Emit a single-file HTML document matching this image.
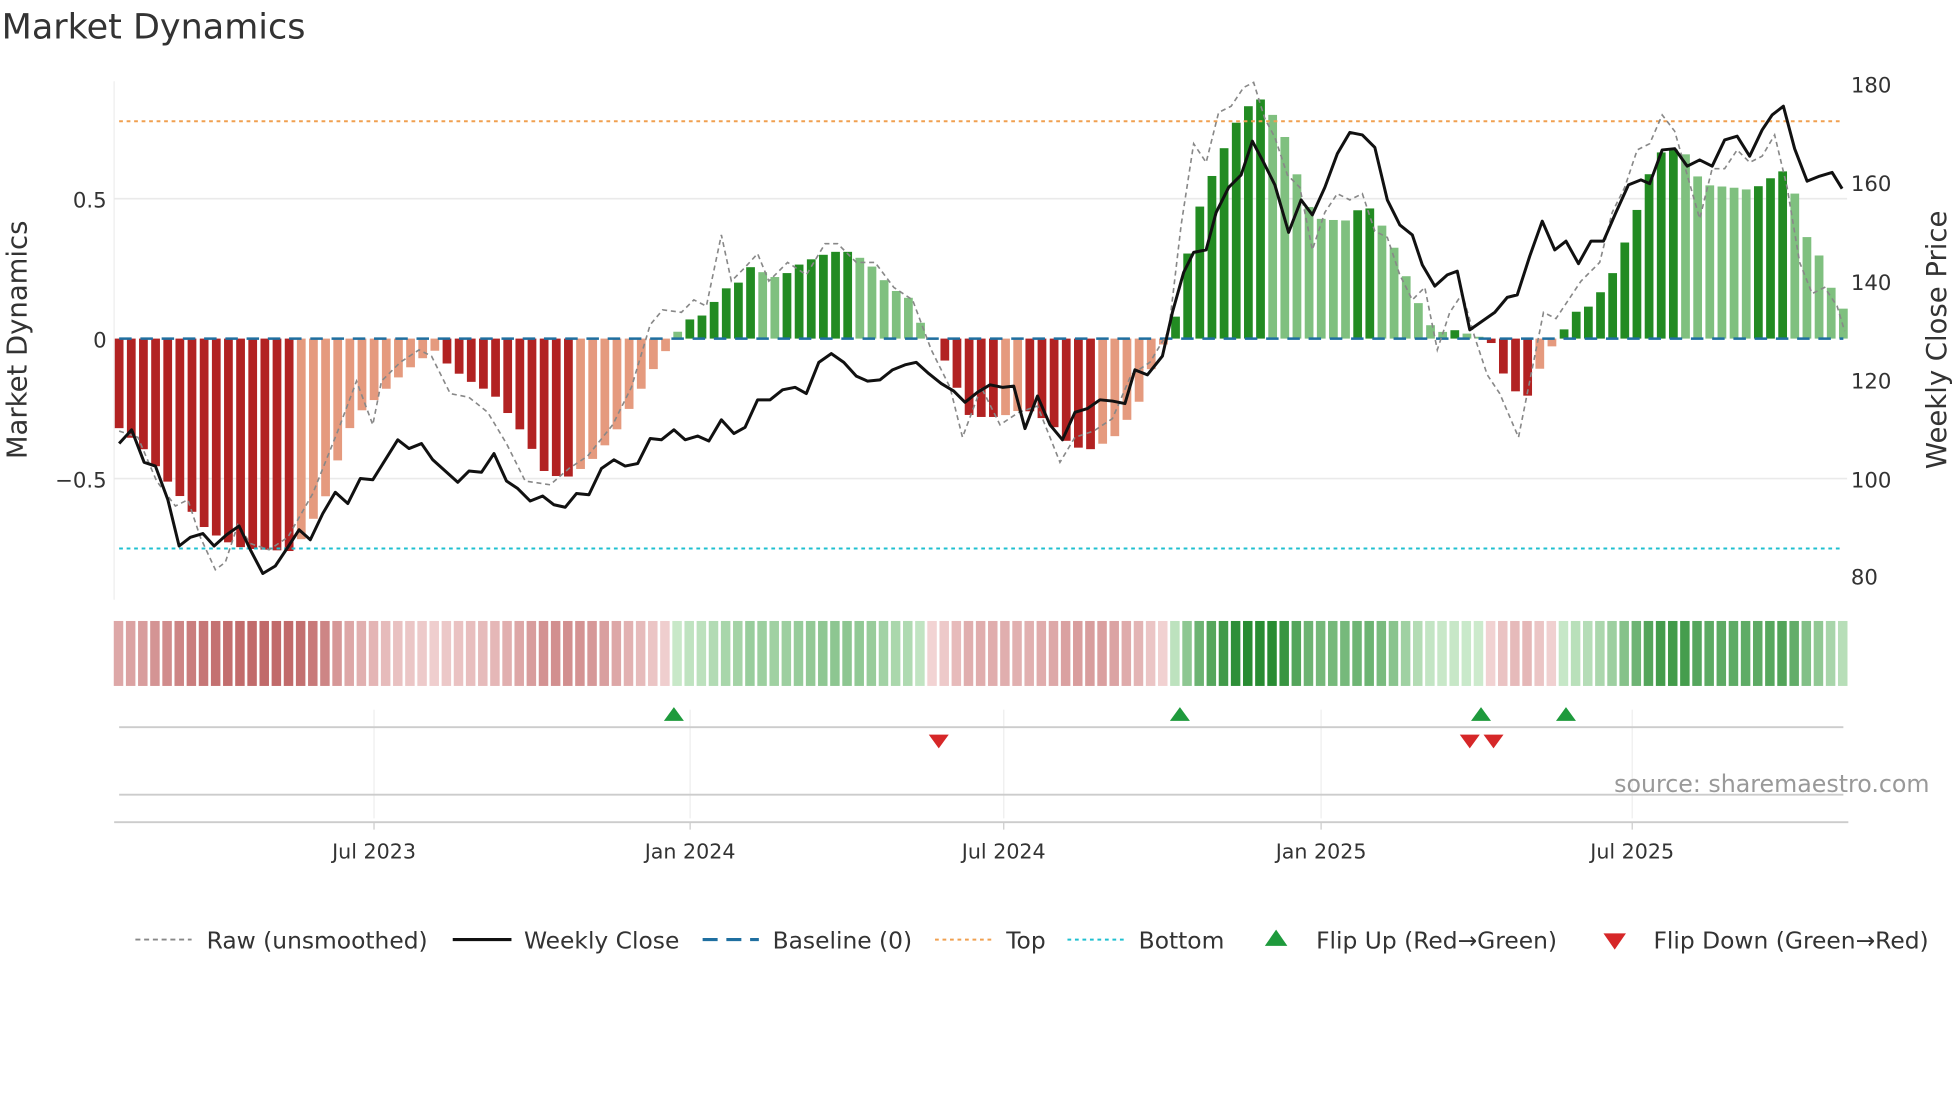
<!DOCTYPE html>
<html><head><meta charset="utf-8"><style>
html,body{margin:0;padding:0;background:#fff;width:1960px;height:1102px;overflow:hidden}
svg{display:block}
text{font-family:"DejaVu Sans","Liberation Sans",sans-serif;fill:#333}
</style></head><body>
<svg id="s" width="1960" height="1102" viewBox="0 0 1568 882" xmlns="http://www.w3.org/2000/svg">
<text x="1" y="31" font-size="28" fill="#333">Market Dynamics</text>
<line x1="91" y1="65" x2="91" y2="480" stroke="#eee" stroke-width="1"/>
<line x1="91" y1="159" x2="1478" y2="159" stroke="#eaeaea" stroke-width="1.3"/>
<line x1="91" y1="383" x2="1478" y2="383" stroke="#eaeaea" stroke-width="1.3"/>
<g id="bars"></g>
<line x1="95" y1="97" x2="1475" y2="97" stroke="#f0a050" stroke-width="1.6" stroke-dasharray="3,3"/>
<line x1="95" y1="439" x2="1475" y2="439" stroke="#20c0d0" stroke-width="1.6" stroke-dasharray="3,3"/>
<line x1="95" y1="271" x2="1475" y2="271" stroke="#1f6fa0" stroke-width="2" stroke-dasharray="10,7"/>
<polyline id="raw" fill="none" stroke="#888" stroke-width="1.3" stroke-dasharray="4,3"/>
<polyline id="px" fill="none" stroke="#111" stroke-width="2.4" stroke-linejoin="round"/>
<text x="85" y="166" font-size="17" text-anchor="end">0.5</text>
<text x="85" y="278" font-size="17" text-anchor="end">0</text>
<text x="85" y="390" font-size="17" text-anchor="end">−0.5</text>
<text x="1481" y="74" font-size="17">180</text>
<text x="1481" y="153" font-size="17">160</text>
<text x="1481" y="232" font-size="17">140</text>
<text x="1481" y="311" font-size="17">120</text>
<text x="1481" y="390" font-size="17">100</text>
<text x="1481" y="468" font-size="17">80</text>
<text transform="translate(21,272) rotate(-90)" font-size="22" text-anchor="middle">Market Dynamics</text>
<text transform="translate(1557,272) rotate(-90)" font-size="22" text-anchor="middle">Weekly Close Price</text>
<g id="heat"></g>
<g stroke="#eee" stroke-width="1">
<line x1="299" y1="568" x2="299" y2="655"/><line x1="552" y1="568" x2="552" y2="655"/><line x1="803" y1="568" x2="803" y2="655"/><line x1="1057" y1="568" x2="1057" y2="655"/><line x1="1306" y1="568" x2="1306" y2="655"/>
</g>
<line x1="95" y1="582" x2="1475" y2="582" stroke="#ccc" stroke-width="1.5"/>
<line x1="95" y1="636" x2="1475" y2="636" stroke="#ccc" stroke-width="1.5"/>
<line x1="91" y1="658" x2="1479" y2="658" stroke="#ccc" stroke-width="1.5"/>
<g fill="#1e9a3c">
<polygon points="531,577 547,577 539,566"/><polygon points="936,577 952,577 944,566"/><polygon points="1177,577 1193,577 1185,566"/><polygon points="1245,577 1261,577 1253,566"/>
</g>
<g fill="#d62728">
<polygon points="743,588 759,588 751,599"/><polygon points="1168,588 1184,588 1176,599"/><polygon points="1187,588 1203,588 1195,599"/>
</g>
<text x="1544" y="634" font-size="19" text-anchor="end" style="fill:#999">source: sharemaestro.com</text>
<g stroke="#ccc"><line x1="299" y1="658" x2="299" y2="664"/><line x1="552" y1="658" x2="552" y2="664"/><line x1="803" y1="658" x2="803" y2="664"/><line x1="1057" y1="658" x2="1057" y2="664"/><line x1="1306" y1="658" x2="1306" y2="664"/></g>
<g font-size="16.5" text-anchor="middle">
<text x="299" y="687">Jul 2023</text><text x="552" y="687">Jan 2024</text><text x="803" y="687">Jul 2024</text><text x="1057" y="687">Jan 2025</text><text x="1306" y="687">Jul 2025</text>
</g>
<g font-size="18.7">
<line x1="108" y1="752" x2="153" y2="752" stroke="#888" stroke-width="1.5" stroke-dasharray="4,3"/><text x="165" y="759">Raw (unsmoothed)</text>
<line x1="362" y1="752" x2="409" y2="752" stroke="#111" stroke-width="2.5"/><text x="419" y="759">Weekly Close</text>
<line x1="562" y1="752" x2="607" y2="752" stroke="#1f6fa0" stroke-width="2.5" stroke-dasharray="12,7"/><text x="618" y="759">Baseline (0)</text>
<line x1="748" y1="752" x2="794" y2="752" stroke="#f0a050" stroke-width="1.6" stroke-dasharray="3,3"/><text x="805" y="759">Top</text>
<line x1="854" y1="752" x2="900" y2="752" stroke="#20c0d0" stroke-width="1.6" stroke-dasharray="3,3"/><text x="911" y="759">Bottom</text>
<polygon points="1012,757 1030,757 1021,744" fill="#1e9a3c"/><text x="1053" y="759">Flip Up (Red→Green)</text>
<polygon points="1283,747 1301,747 1292,760" fill="#d62728"/><text x="1323" y="759">Flip Down (Green→Red)</text>
</g>
</svg>
<script>
var K=[[95,-0.32],[112,-0.38],[128,-0.48],[145,-0.57],[162,-0.67],[178,-0.72],[195,-0.75],[235,-0.76],[243,-0.70],[259,-0.58],[267,-0.47],[283,-0.28],[299,-0.22],[323,-0.12],[347,-0.04],[355,-0.08],[371,-0.14],[395,-0.20],[420,-0.35],[436,-0.48],[452,-0.50],[470,-0.45],[490,-0.35],[510,-0.2],[528,-0.07],[540,0.0],[545,0.06],[561,0.08],[577,0.16],[585,0.2],[593,0.2],[601,0.26],[617,0.22],[625,0.22],[641,0.27],[665,0.31],[681,0.31],[697,0.26],[713,0.18],[729,0.14],[737,0.05],[745,0.0],[750,-0.02],[760,-0.12],[776,-0.28],[800,-0.28],[820,-0.25],[840,-0.3],[856,-0.38],[870,-0.40],[890,-0.36],[905,-0.27],[915,-0.2],[925,-0.05],[935,0.0],[942,0.1],[950,0.3],[958,0.45],[974,0.63],[990,0.78],[1004,0.86],[1012,0.85],[1028,0.72],[1044,0.5],[1052,0.43],[1076,0.42],[1092,0.48],[1100,0.45],[1116,0.32],[1132,0.15],[1148,0.02],[1164,0.03],[1180,0.01],[1190,0.0],[1196,-0.03],[1204,-0.14],[1220,-0.23],[1228,-0.14],[1238,-0.06],[1245,0.0],[1250,0.02],[1258,0.09],[1274,0.12],[1290,0.23],[1306,0.41],[1322,0.62],[1330,0.67],[1346,0.68],[1362,0.55],[1386,0.54],[1402,0.53],[1426,0.6],[1434,0.55],[1442,0.43],[1450,0.29],[1458,0.3],[1466,0.17],[1476,0.1]];
function interp(x){for(var i=1;i<K.length;i++){if(x<=K[i][0]){var a=K[i-1],b=K[i];return a[1]+(b[1]-a[1])*(x-a[0])/(b[0]-a[0]);}}return K[K.length-1][1];}
var NS="http://www.w3.org/2000/svg",bars=document.getElementById('bars'),heat=document.getElementById('heat');
var n=143,step=(1475-95)/(n-1),prev=0;
function mix(c1,c2,t){return 'rgb('+c1.map(function(v,i){return Math.round(v+(c2[i]-v)*t)}).join(',')+')';}
for(var i=0;i<n;i++){var x=95+i*step,v=interp(x);var dark=Math.abs(v)>=Math.abs(prev);prev=v;
var h=Math.abs(v)*224,r=document.createElementNS(NS,'rect');r.setAttribute('x',x-3.5);r.setAttribute('width',7);
r.setAttribute('y',v>=0?271-h:271);r.setAttribute('height',Math.max(h,1));
r.setAttribute('fill',v>=0?(dark?'#228b22':'#7fc07f'):(dark?'#b22222':'#e59a7e'));bars.appendChild(r);
var t=Math.min(Math.abs(v)/0.8,1),hr=document.createElementNS(NS,'rect');hr.setAttribute('x',x-4.3);hr.setAttribute('width',7.6);hr.setAttribute('y',497);hr.setAttribute('height',52);
hr.setAttribute('fill',v>=0?mix([205,235,205],[40,140,50],t):mix([242,212,212],[190,100,100],t));heat.appendChild(hr);}
var P=[[95,355],[105,344],[115,370],[124,373],[134,400],[143,437],[152,430],[162,427],[171,437],[181,428],[191,421],[200,440],[210,459],[220,453],[230,438],[239,424],[248,432],[258,411],[268,394],[278,403],[288,383],[298,384],[308,368],[318,352],[327,359],[337,355],[346,368],[356,377],[366,386],[375,377],[385,378],[395,363],[405,385],[414,391],[424,401],[434,397],[443,404],[452,406],[461,395],[471,396],[481,375],[491,368],[500,373],[510,371],[520,351],[529,352],[539,344],[548,352],[558,349],[567,353],[577,336],[587,347],[596,342],[606,320],[616,320],[626,312],[636,310],[645,315],[655,290],[665,283],[675,290],[685,301],[694,305],[704,304],[714,296],[724,292],[733,290],[743,299],[753,307],[763,313],[772,322],[782,314],[792,308],[802,310],[811,309],[820,343],[830,317],[840,340],[850,352],[860,330],[870,327],[880,320],[890,321],[900,323],[908,296],[918,300],[930,285],[938,250],[947,218],[955,202],[965,200],[973,170],[983,150],[993,140],[1002,113],[1011,130],[1020,148],[1031,186],[1041,160],[1050,172],[1060,150],[1070,123],[1080,106],[1090,108],[1100,118],[1110,160],[1120,180],[1130,188],[1138,212],[1148,229],[1158,220],[1166,217],[1176,264],[1186,257],[1196,250],[1206,238],[1214,236],[1224,205],[1234,177],[1244,200],[1253,193],[1263,211],[1273,193],[1283,193],[1293,170],[1303,148],[1313,144],[1320,147],[1330,120],[1340,119],[1350,133],[1360,128],[1370,133],[1380,112],[1390,109],[1400,125],[1410,104],[1418,92],[1427,85],[1436,119],[1446,145],[1456,141],[1466,138],[1474,151]];
document.getElementById('px').setAttribute('points',P.map(function(p){return p.join(',')}).join(' '));
var R=[[95,345],[110,350],[125,385],[140,405],[150,400],[160,430],[172,456],[180,450],[190,420],[200,435],[215,440],[230,430],[250,395],[270,345],[285,305],[298,340],[305,305],[320,290],[335,280],[345,285],[360,315],[375,318],[390,330],[405,355],[420,385],[440,388],[455,375],[470,365],[490,340],[505,310],[520,260],[530,248],[545,250],[555,240],[565,245],[577,188],[585,225],[595,215],[606,203],[615,225],[630,210],[645,220],[660,195],[670,195],[685,210],[700,210],[715,230],[730,240],[745,280],[760,310],[770,350],[785,310],[800,340],[815,330],[830,325],[848,370],[860,350],[875,345],[890,335],[905,300],[920,290],[935,265],[945,180],[955,115],[965,130],[975,90],[985,85],[995,70],[1003,66],[1012,95],[1020,110],[1030,140],[1040,150],[1050,200],[1060,170],[1070,155],[1080,160],[1090,155],[1100,185],[1110,190],[1120,220],[1130,240],[1140,230],[1150,280],[1160,250],[1170,235],[1180,270],[1190,300],[1200,315],[1215,350],[1225,300],[1235,250],[1245,255],[1255,240],[1265,225],[1280,210],[1290,170],[1300,150],[1310,120],[1320,115],[1330,92],[1340,105],[1350,140],[1360,175],[1370,135],[1380,135],[1390,120],[1400,130],[1410,125],[1420,108],[1430,150],[1440,210],[1450,235],[1460,230],[1470,245],[1476,265]];
document.getElementById('raw').setAttribute('points',R.map(function(p){return p.join(',')}).join(' '));
</script>
</body></html>
